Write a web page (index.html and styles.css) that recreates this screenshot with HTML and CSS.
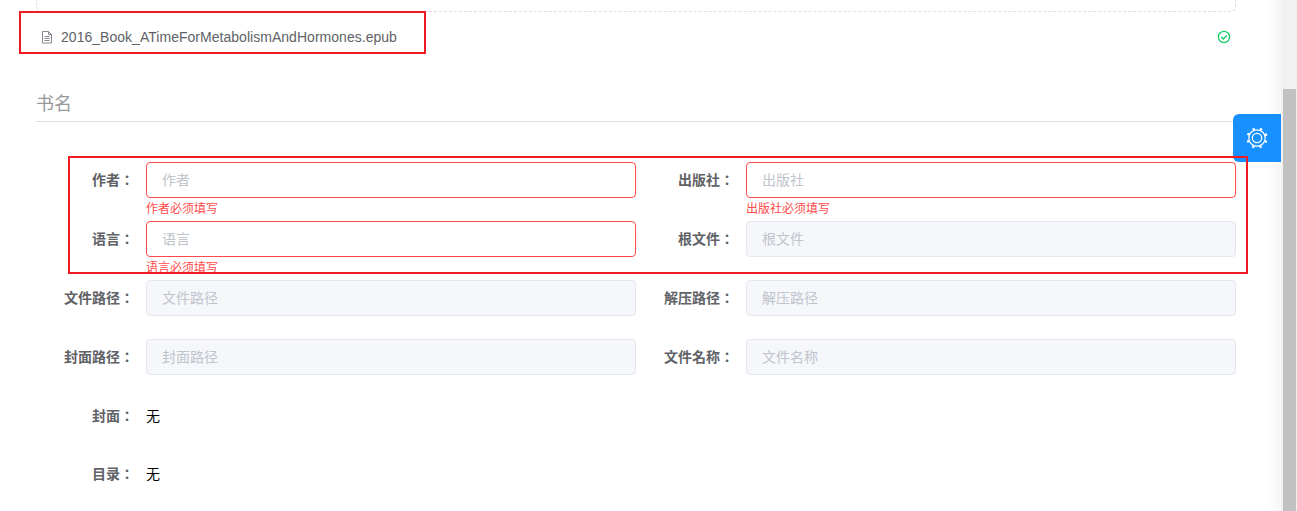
FILE: index.html
```html
<!DOCTYPE html>
<html lang="en">
<head>
  <meta charset="UTF-8">
  <meta name="viewport" content="width=device-width, initial-scale=1.0">
  <title>上传图书</title>
  <link rel="stylesheet" href="styles.css">
</head>
<body>
  <div class="page">
    <div class="content">
      <div class="dragger"></div>
      <div class="upload-item">
        <svg class="file-icon" width="12" height="14" viewBox="0 0 12 14">
          <path d="M1.5 1.5h6l3 3v8.5h-9z M7.5 1.5v3h3 M3.5 6.5h5 M3.5 8.5h5 M3.5 10.5h5" fill="none" stroke="#85888f" stroke-width="1"/>
        </svg>
        <span class="file-name">2016_Book_ATimeForMetabolismAndHormones.epub</span>
        <svg class="check-icon" width="14" height="14" viewBox="0 0 14 14">
          <circle cx="7" cy="7" r="5.6" fill="none" stroke="#13ce66" stroke-width="1.3"/>
          <path d="M4.3 7l2 2 3.5-3.6" fill="none" stroke="#13ce66" stroke-width="1.4"/>
        </svg>
      </div>
      <h2 class="title">书名</h2>

      <div class="form-grid">
        <div class="form-item">
          <label class="form-label">作者：</label>
          <div class="form-field">
            <input class="input is-error" placeholder="作者">
            <div class="error-msg">作者必须填写</div>
          </div>
        </div>
        <div class="form-item">
          <label class="form-label">出版社：</label>
          <div class="form-field">
            <input class="input is-error" placeholder="出版社">
            <div class="error-msg">出版社必须填写</div>
          </div>
        </div>
        <div class="form-item">
          <label class="form-label">语言：</label>
          <div class="form-field">
            <input class="input is-error" placeholder="语言">
            <div class="error-msg">语言必须填写</div>
          </div>
        </div>
        <div class="form-item">
          <label class="form-label">根文件：</label>
          <div class="form-field"><input class="input" placeholder="根文件" disabled></div>
        </div>
        <div class="form-item">
          <label class="form-label">文件路径：</label>
          <div class="form-field"><input class="input" placeholder="文件路径" disabled></div>
        </div>
        <div class="form-item">
          <label class="form-label">解压路径：</label>
          <div class="form-field"><input class="input" placeholder="解压路径" disabled></div>
        </div>
        <div class="form-item">
          <label class="form-label">封面路径：</label>
          <div class="form-field"><input class="input" placeholder="封面路径" disabled></div>
        </div>
        <div class="form-item">
          <label class="form-label">文件名称：</label>
          <div class="form-field"><input class="input" placeholder="文件名称" disabled></div>
        </div>
      </div>

      <div class="text-rows">
        <div class="text-row">
          <label class="form-label">封面：</label>
          <span class="text-value">无</span>
        </div>
        <div class="text-row">
          <label class="form-label">目录：</label>
          <span class="text-value">无</span>
        </div>
      </div>
    </div>
    <div class="scrollbar"><div class="scroll-thumb"></div></div>

    <div class="settings-btn">
      <svg width="24" height="24" viewBox="0 0 24 24">
        <circle cx="12" cy="12" r="4.7" fill="none" stroke="#fff" stroke-width="1.3"/>
        <circle cx="12" cy="12" r="8.2" fill="none" stroke="#fff" stroke-width="1.2"/>
        <circle cx="12" cy="12" r="9.6" fill="none" stroke="#fff" stroke-width="2" stroke-dasharray="2.4 5.14" stroke-dashoffset="-2.57"/>
      </svg>
    </div>

    <div class="mark mark-file"></div>
    <div class="mark mark-fields"></div>
  </div>
</body>
</html>
```

FILE: styles.css
```css
* {
  box-sizing: border-box;
}
html, body {
  margin: 0;
  height: 100%;
  overflow: hidden;
}
body {
  font-family: "Liberation Sans", "Noto Sans CJK SC", sans-serif;
  background-color: #fff;
}
.page {
  position: relative;
  display: flex;
  height: 511px;
}
.content {
  flex: 1;
  padding: 0 45px 0 36px;
  background: linear-gradient(to left, #f5f5f5, #fff 12px);
}
.scrollbar {
  width: 16px;
  background-color: #f1f1f1;
  padding: 89px 1px 0 2px;
}
.scroll-thumb {
  height: 100%;
  background-color: #c1c1c1;
}

/* upload area */
.dragger {
  height: 12px;
  border: 1px dashed #dcdfe6;
  border-top: none;
  border-radius: 0 0 6px 6px;
}
.upload-item {
  display: flex;
  align-items: center;
  height: 25px;
  margin-top: 12px;
  padding: 0 5px;
  color: #606266;
  font-size: 14px;
  letter-spacing: .03px;
}
.file-icon {
  margin-right: 8px;
}
.file-name {
  flex: 1;
}
.title {
  height: 32px;
  margin: 41px 0 0;
  border-bottom: 1px solid #dcdfe6;
  color: #999;
  font-size: 18px;
  font-weight: normal;
  line-height: 28px;
}

/* form */
.form-grid {
  display: grid;
  grid-template-columns: 600px 600px;
  row-gap: 23px;
  margin-top: 40px;
}
.form-item {
  display: flex;
  height: 36px;
}
.form-label {
  flex: none;
  width: 110px;
  padding-right: 12px;
  color: #606266;
  font-family: "Liberation Sans", "Noto Sans CJK TC", sans-serif;
  font-size: 14px;
  font-weight: bold;
  line-height: 36px;
  text-align: right;
}
.form-field {
  flex: 1;
  position: relative;
}
.input {
  display: block;
  width: 100%;
  height: 36px;
  padding: 0 15px;
  border: 1px solid #dcdfe6;
  border-radius: 4px;
  outline: none;
  background-color: #fff;
  color: #606266;
  font-family: inherit;
  font-size: 14px;
}
.input::placeholder {
  color: #c0c4cc;
  opacity: 1;
}
.input:disabled {
  background-color: #f5f7fa;
  border-color: #e4e7ed;
}
.input.is-error {
  border-color: #ff4949;
}
.error-msg {
  position: absolute;
  top: 100%;
  left: 0;
  padding-top: 4px;
  color: #ff4949;
  font-size: 12px;
  line-height: 14px;
}
.text-rows {
  display: flex;
  flex-direction: column;
  gap: 22px;
  margin-top: 23px;
}
.text-row {
  display: flex;
  height: 36px;
}
.text-value {
  font-size: 14px;
  line-height: 36px;
  color: #000;
}

/* floating settings button */
.settings-btn {
  position: absolute;
  top: 114px;
  left: 1233px;
  display: flex;
  align-items: center;
  justify-content: center;
  width: 48px;
  height: 48px;
  border-radius: 6px 0 0 6px;
  background-color: #1890ff;
}

/* red annotation boxes */
.mark {
  position: absolute;
  border: 2px solid #ed1c24;
}
.mark-file {
  left: 19px;
  top: 11px;
  width: 407px;
  height: 43px;
}
.mark-fields {
  left: 68px;
  top: 156px;
  width: 1180px;
  height: 118px;
}
```
